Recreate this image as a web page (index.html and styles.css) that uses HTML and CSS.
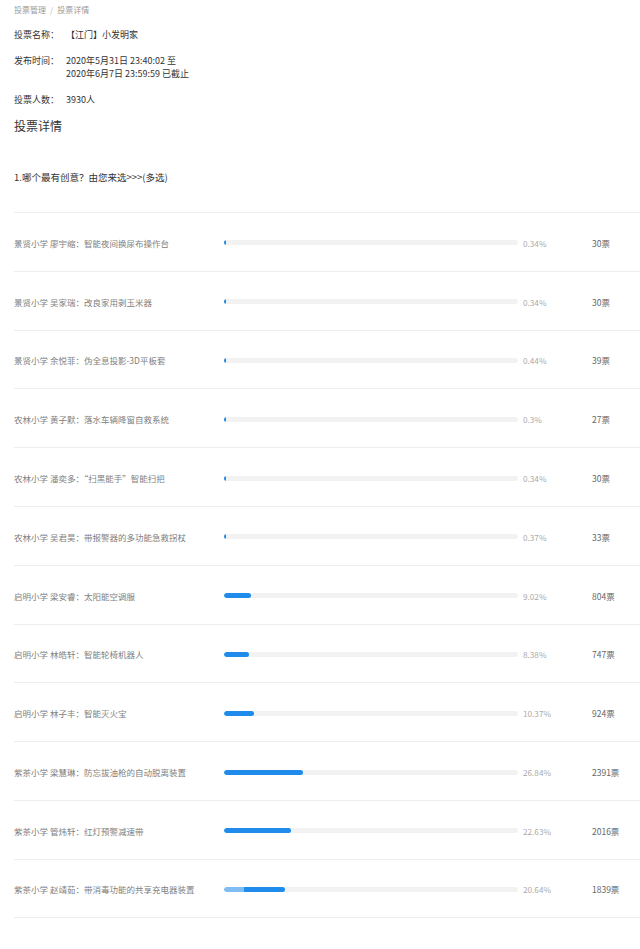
FILE: index.html
```html
<!DOCTYPE html>
<html lang="zh">
<head>
<meta charset="utf-8">
<link rel="stylesheet" href="styles.css">
</head>
<body>
<div class="page">
  <div class="breadcrumb"><span>投票管理</span><span class="sep">/</span><span class="cur">投票详情</span></div>
  <div class="info">
    <div class="info-row"><span class="label">投票名称：</span><span class="value">【江门】小发明家</span></div>
    <div class="info-row"><span class="label">发布时间：</span><span class="value">2020年5月31日 23:40:02 至<br>2020年6月7日 23:59:59 已截止</span></div>
    <div class="info-row"><span class="label">投票人数：</span><span class="value">3930人</span></div>
  </div>
  <h2 class="title">投票详情</h2>
  <p class="question">1.哪个最有创意？由您来选&gt;&gt;&gt;(多选)</p>
  <ul class="list">
    <li class="row"><span class="name">景贤小学 廖宇缩：智能夜间换尿布操作台</span><span class="track"><span class="fill" style="width:0.34%"></span></span><span class="pct">0.34%</span><span class="votes">30票</span></li>
    <li class="row"><span class="name">景贤小学 吴家瑞：改良家用剥玉米器</span><span class="track"><span class="fill" style="width:0.34%"></span></span><span class="pct">0.34%</span><span class="votes">30票</span></li>
    <li class="row"><span class="name">景贤小学 余悦菲：伪全息投影-3D平板套</span><span class="track"><span class="fill" style="width:0.44%"></span></span><span class="pct">0.44%</span><span class="votes">39票</span></li>
    <li class="row"><span class="name">农林小学 黄子默：落水车辆降窗自救系统</span><span class="track"><span class="fill" style="width:0.3%"></span></span><span class="pct">0.3%</span><span class="votes">27票</span></li>
    <li class="row"><span class="name">农林小学 潘奕多：“扫黑能手”智能扫把</span><span class="track"><span class="fill" style="width:0.34%"></span></span><span class="pct">0.34%</span><span class="votes">30票</span></li>
    <li class="row"><span class="name">农林小学 吴君昊：带报警器的多功能急救拐杖</span><span class="track"><span class="fill" style="width:0.37%"></span></span><span class="pct">0.37%</span><span class="votes">33票</span></li>
    <li class="row"><span class="name">启明小学 梁安睿：太阳能空调服</span><span class="track"><span class="fill" style="width:9.02%"></span></span><span class="pct">9.02%</span><span class="votes">804票</span></li>
    <li class="row"><span class="name">启明小学 林皓轩：智能轮椅机器人</span><span class="track"><span class="fill" style="width:8.38%"></span></span><span class="pct">8.38%</span><span class="votes">747票</span></li>
    <li class="row"><span class="name">启明小学 林子丰：智能灭火宝</span><span class="track"><span class="fill" style="width:10.37%"></span></span><span class="pct">10.37%</span><span class="votes">924票</span></li>
    <li class="row"><span class="name">紫茶小学 梁慧琳：防忘拔油枪的自动脱离装置</span><span class="track"><span class="fill" style="width:26.84%"></span></span><span class="pct">26.84%</span><span class="votes">2391票</span></li>
    <li class="row"><span class="name">紫茶小学 管炜轩：红灯预警减速带</span><span class="track"><span class="fill" style="width:22.63%"></span></span><span class="pct">22.63%</span><span class="votes">2016票</span></li>
    <li class="row"><span class="name">紫茶小学 赵靖茹：带消毒功能的共享充电器装置</span><span class="track"><span class="fill active" style="width:20.64%"></span></span><span class="pct">20.64%</span><span class="votes">1839票</span></li>
  </ul>
</div>
</body>
</html>
```

FILE: styles.css
```css
* { box-sizing: border-box; }
html, body { margin: 0; padding: 0; background: #fff; }
body {
  font-family: "Noto Sans CJK SC", "Noto Sans", "Liberation Sans", sans-serif;
  color: #333;
}
.page { padding-left: 14px; }

.breadcrumb {
  height: 20px;
  line-height: 20px;
  font-size: 8px;
  color: #999;
}
.breadcrumb .sep { margin: 0 4px; color: #bbb; }

.info { margin-top: 8px; display: flex; flex-direction: column; gap: 12px; }
.info-row { display: flex; font-size: 9px; line-height: 13.5px; color: #333; }
.info-row .label { width: 52px; flex: none; }

.title {
  margin: 11px 0 0;
  font-size: 12px;
  line-height: 18px;
  font-weight: normal;
  color: #333;
}

.question {
  margin: 35px 0 0;
  font-size: 9.5px;
  line-height: 14px;
  color: #333;
}

.list { list-style: none; margin: 28px 0 0; padding: 0; }
.row {
  height: 58.8px;
  padding-top: 2px;
  border-top: 1px solid #eeeeee;
  display: flex;
  align-items: center;
  font-size: 8.5px;
}
.row:last-child { border-bottom: 1px solid #eeeeee; }
.name { width: 210px; flex: none; color: #808080; white-space: nowrap; }
.track {
  width: 294px;
  flex: none;
  height: 5px;
  border-radius: 3px;
  background: #f2f2f2;
  overflow: hidden;
  display: flex;
}
.fill {
  height: 100%;
  min-width: 2px;
  border-radius: 3px;
  background: #1f8ceb;
}
.fill.active {
  background: linear-gradient(to right, #7fbdf3 0, #7fbdf3 33%, #1f8ceb 33%);
}
.pct { width: 74px; flex: none; padding-left: 5px; color: #aaa; font-size: 8.2px; }
.votes { color: #666; font-size: 8.5px; }
```
